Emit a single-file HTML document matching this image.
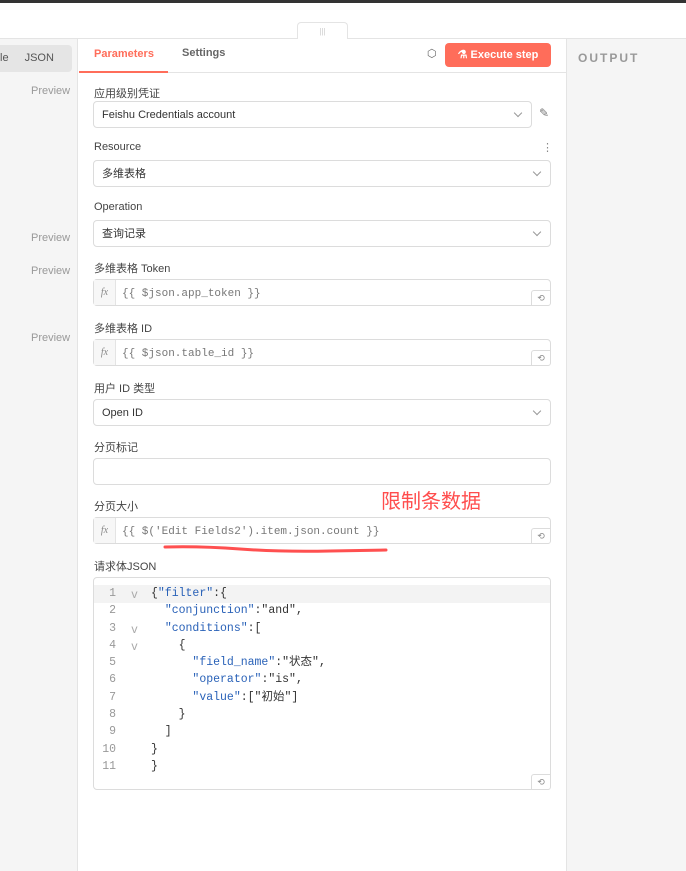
<!DOCTYPE html>
<html><head><meta charset="utf-8"><style>
*{box-sizing:border-box;margin:0;padding:0}
body{width:686px;height:871px;position:relative;overflow:hidden;background:#fff;font-family:"Liberation Sans","Noto Sans CJK SC",sans-serif;font-size:11px;color:#333}
.a{position:absolute}
.lbl{position:absolute;left:94px;font-size:11px;color:#444}
.box{position:absolute;left:93px;width:458px;height:27px;border:1px solid #dcdcdc;border-radius:4px;background:#fff;padding:0 8px;line-height:26px;font-size:11px;color:#333}
.chev{position:absolute;right:10px;top:8px;width:6px;height:6px;border-right:1px solid #999;border-bottom:1px solid #999;transform:rotate(45deg)}
.fx{position:absolute;left:0;top:0;width:22px;height:25px;border-right:1px solid #e4e4e4;background:#f7f7f7;font-style:italic;font-family:"Liberation Serif",serif;color:#888;text-align:center;font-size:10px}
.mono{font-family:"Liberation Mono",monospace;color:#777;font-size:11px;position:absolute;left:28px;top:1px}
.rst{position:absolute;right:-1px;bottom:-1px;width:20px;height:16px;border:1px solid #dcdcdc;border-radius:3px 0 3px 0;background:#fff;font-size:9px;color:#888;text-align:center;line-height:14px}
.code div{height:17.3px;line-height:17.3px;white-space:pre;font-family:"Liberation Mono","Noto Sans CJK SC",monospace;font-size:11.5px}
.k{color:#2a62b8}
</style></head><body>
<div class="a" style="left:0;top:0;width:686px;height:3px;background:#333"></div>
<div class="a" style="left:0;top:38px;width:686px;height:1px;background:#e4e4e4"></div>
<div class="a" style="left:297px;top:22px;width:51px;height:17px;border:1px solid #e4e4e4;border-bottom:none;border-radius:4px 4px 0 0;background:#fff;color:#ccc;font-size:8px;text-align:center;line-height:18px">|||</div>
<div class="a" style="left:0;top:39px;width:78px;height:832px;background:#f5f5f5;border-right:1px solid #e4e4e4"></div>
<div class="a" style="left:0;top:45px;width:72px;height:27px;background:#e5e5e5;border-radius:0 4px 4px 0;font-size:11px;color:#555;line-height:27px"><span>le</span><span style="margin-left:16px">JSON</span></div>
<div class="a" style="left:31px;top:85px;color:#999">Preview</div>
<div class="a" style="left:31px;top:232px;color:#999">Preview</div>
<div class="a" style="left:31px;top:265px;color:#999">Preview</div>
<div class="a" style="left:31px;top:332px;color:#999">Preview</div>
<div class="a" style="left:566px;top:39px;width:120px;height:832px;background:#f5f5f5;border-left:1px solid #e4e4e4"></div>
<div class="a" style="left:578px;top:51px;font-size:12px;font-weight:bold;color:#999;letter-spacing:2px">OUTPUT</div>
<div class="a" style="left:79px;top:72px;width:487px;height:1px;background:#e4e4e4"></div>
<div class="a" style="left:79px;top:71px;width:89px;height:2px;background:#ff6d5a"></div>
<div class="a" style="left:94px;top:48px;font-size:11px;font-weight:bold;color:#ff6d5a">Parameters</div>
<div class="a" style="left:182px;top:47px;font-size:11px;font-weight:bold;color:#666">Settings</div>
<div class="a" style="left:427px;top:47px;font-size:11px;color:#666">⬡</div>
<div class="a" style="left:445px;top:43px;width:106px;height:24px;background:#ff6d5a;border-radius:4px;color:#fff;font-weight:bold;font-size:11px;line-height:24px;text-align:center">⚗ Execute step</div>

<div class="lbl" style="top:85px">应用级别凭证</div>
<div class="box" style="top:101px;width:439px">Feishu Credentials account<div class="chev"></div></div>
<div class="a" style="left:539px;top:106px;color:#777;font-size:12px">✎</div>
<div class="lbl" style="top:141px">Resource</div>
<div class="a" style="left:542px;top:141px;color:#888">⋮</div>
<div class="box" style="top:160px">多维表格<div class="chev"></div></div>
<div class="lbl" style="top:201px">Operation</div>
<div class="box" style="top:220px">查询记录<div class="chev"></div></div>
<div class="lbl" style="top:260px">多维表格 Token</div>
<div class="box" style="top:279px;padding:0"><div class="fx">fx</div><div class="mono">{{ $json.app_token }}</div><div class="rst">⟲</div></div>
<div class="lbl" style="top:320px">多维表格 ID</div>
<div class="box" style="top:339px;padding:0"><div class="fx">fx</div><div class="mono">{{ $json.table_id }}</div><div class="rst">⟲</div></div>
<div class="lbl" style="top:380px">用户 ID 类型</div>
<div class="box" style="top:399px">Open ID<div class="chev"></div></div>
<div class="lbl" style="top:439px">分页标记</div>
<div class="box" style="top:458px"></div>
<div class="lbl" style="top:498px">分页大小</div>
<div class="a" style="left:381px;top:485px;font-size:20px;color:#ff4d4d">限制条数据</div>
<div class="box" style="top:517px;padding:0"><div class="fx">fx</div><div class="mono">{{ $('Edit Fields2').item.json.count }}</div><div class="rst">⟲</div></div>
<svg class="a" style="left:0;top:0" width="686" height="871"><path d="M165 547 Q200 546 240 549 T330 551 L386 550" stroke="#ff5050" stroke-width="3" fill="none" stroke-linecap="round"/><path d="M216 720 Q260 718 290 716 T333 712" stroke="#ff5050" stroke-width="3" fill="none" stroke-linecap="round"/></svg>
<div class="lbl" style="top:558px">请求体JSON</div>
<div class="a" style="left:93px;top:577px;width:458px;height:213px;border:1px solid #dcdcdc;border-radius:4px;background:#fff">
<div class="a" style="left:0;top:7px;width:456px;height:18px;background:#f3f3f3"></div>
<div class="a code" style="left:8px;top:7px;width:14px;text-align:right;color:#999"><div>1</div><div>2</div><div>3</div><div>4</div><div>5</div><div>6</div><div>7</div><div>8</div><div>9</div><div>10</div><div>11</div></div>
<div class="a code" style="left:37px;top:9px;color:#aaa;font-size:9px"><div>v</div><div> </div><div>v</div><div>v</div></div>
<div class="a code" style="left:57px;top:7px"><div>{<span class="k">"filter"</span>:{</div><div>  <span class="k">"conjunction"</span>:"and",</div><div>  <span class="k">"conditions"</span>:[</div><div>    {</div><div>      <span class="k">"field_name"</span>:"状态",</div><div>      <span class="k">"operator"</span>:"is",</div><div>      <span class="k">"value"</span>:["初始"]</div><div>    }</div><div>  ]</div><div>}</div><div>}</div></div>
<div class="rst">⟲</div>
</div>
</body></html>
